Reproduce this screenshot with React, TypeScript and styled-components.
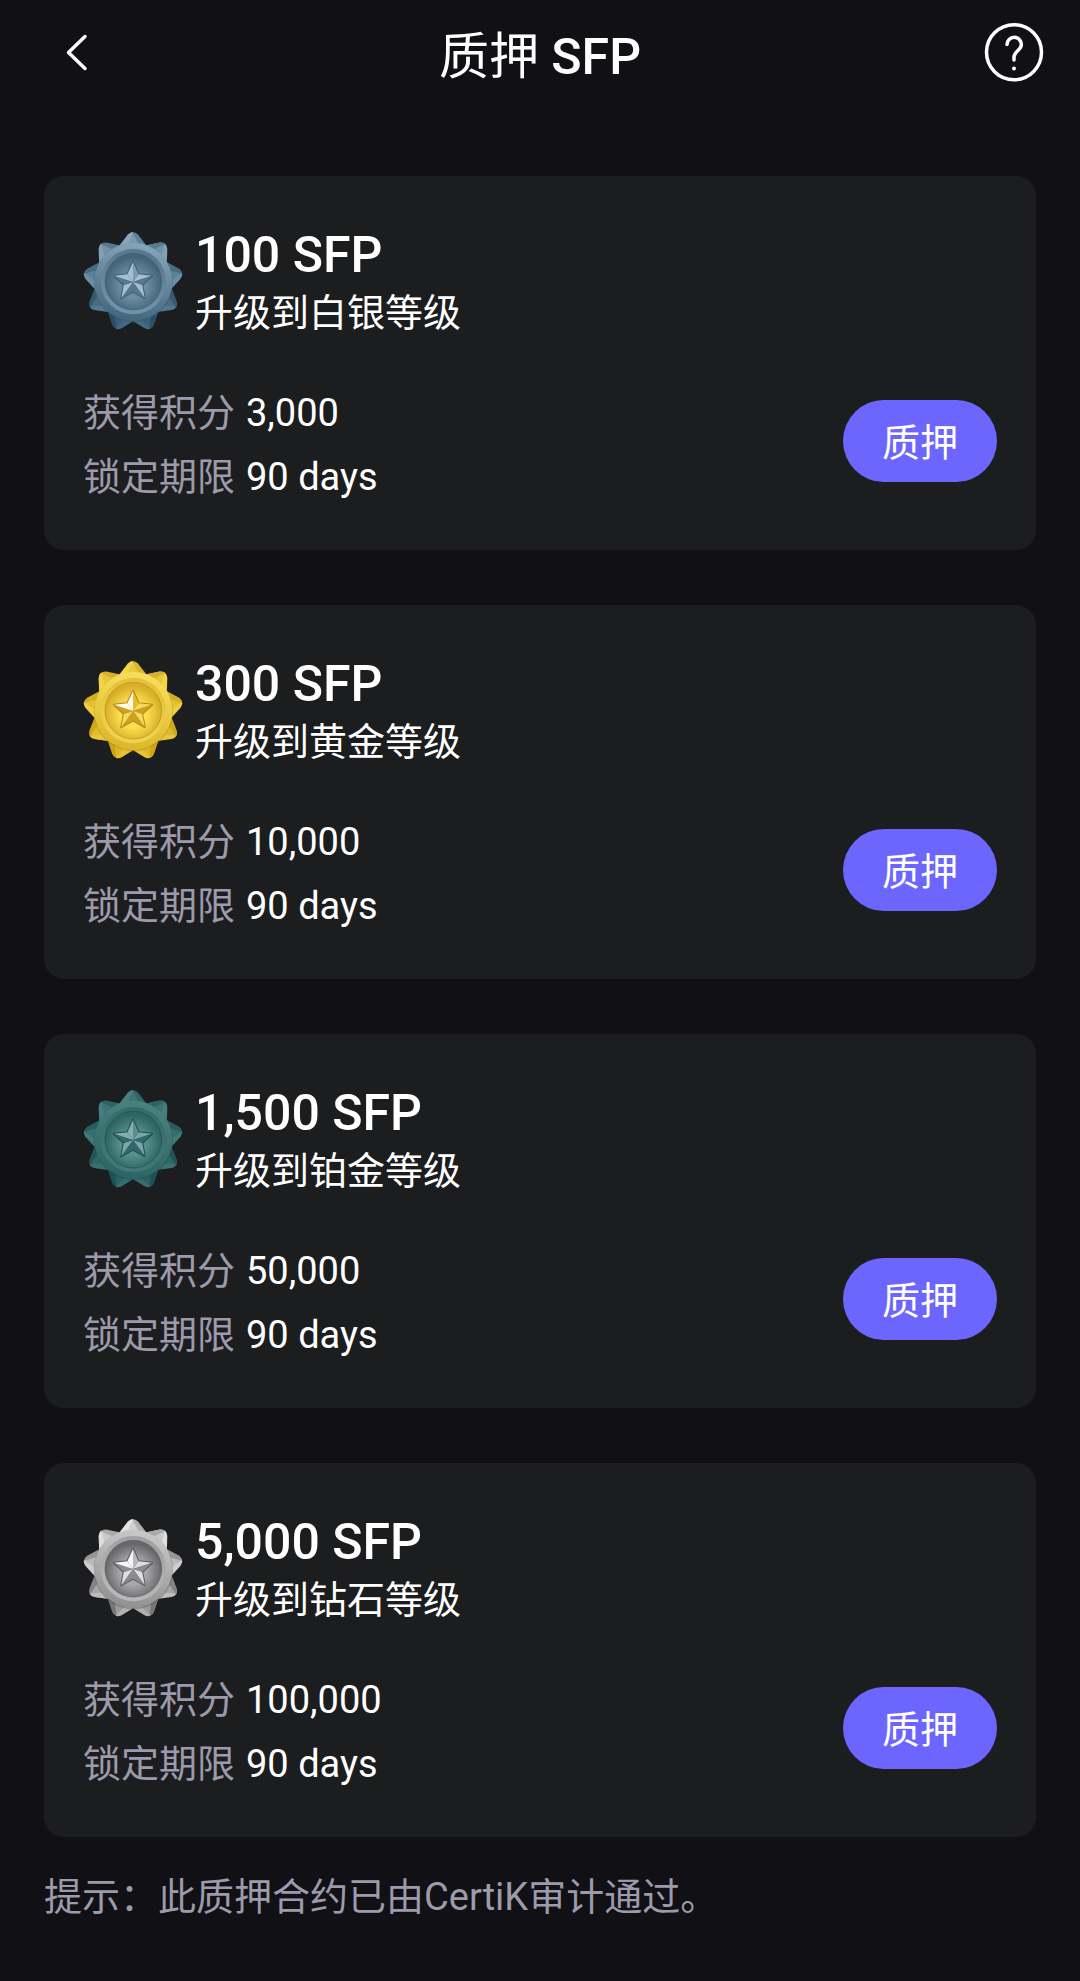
import React, { useId } from "react";
import styled, { createGlobalStyle } from "styled-components";

const GlobalStyle = createGlobalStyle`
  *, *::before, *::after { box-sizing: border-box; }
  html { background: #111015; }
  body {
    margin: 0;
    background: #111015;
    color: #ffffff;
    font-family: Roboto, "Noto Sans CJK SC", sans-serif;
    font-size: 38px;
    line-height: 64px;
  }
  h1, h2, p, dl, dd, ul { margin: 0; padding: 0; }
  button { font: inherit; color: inherit; border: 0; cursor: pointer; }
`;

const Header = styled.header`
  display: grid;
  grid-template-columns: 1fr auto 1fr;
  align-items: center;
  height: 112px;
  padding: 0 32px 8px;
`;

const Title = styled.h1`
  font-size: 50px;
  font-weight: 500;
  line-height: 64px;
  padding-top: 10px;
`;

const Han = styled.span`
  font-weight: 400;
`;

const IconButton = styled.button<{ $end?: boolean }>`
  display: flex;
  justify-self: ${({ $end }) => ($end ? "end" : "start")};
  padding: 0;
  background: none;
`;

const Main = styled.main`
  padding: 64px 44px 32px;
`;

const TierList = styled.ul`
  display: grid;
  gap: 55px;
  list-style: none;
`;

const Card = styled.li`
  display: grid;
  gap: 40px;
  padding: 46px 39px 41px;
  border-radius: 20px;
  background: #1c1d1f;
`;

const CardHead = styled.div`
  display: flex;
  align-items: center;
  gap: 12px;
`;

const Heading = styled.div`
  padding-top: 4px;
`;

const Amount = styled.h2`
  font-size: 50px;
  font-weight: 500;
  line-height: 59px;
`;

const Level = styled.p`
  line-height: 56px;
`;

const CardBody = styled.div`
  display: flex;
  align-items: center;
  justify-content: space-between;
`;

const Fact = styled.div`
  display: flex;
  gap: 11px;
`;

const Term = styled.dt`
  color: #9d9bab;
`;

const StakeButton = styled.button`
  margin-bottom: 8px;
  padding: 11px 39px 7px;
  border-radius: 41px;
  background: #6c66ff;
`;

const Note = styled.p`
  padding-top: 28px;
  color: #9d9bab;
`;

type Palette = {
  tipLight: string;
  tipDark: string;
  baseLight: string;
  baseDark: string;
  ringTop: string;
  ringBottom: string;
  wellEdge: string;
  wellCore: string;
  starLight: string;
  starMid: string;
  starDark: string;
  glint: string;
  line: string;
};

const palettes: Record<string, Palette> = {
  silver: {
    tipLight: "#8aa8bc", tipDark: "#5d8096", baseLight: "#426882", baseDark: "#294c63",
    ringTop: "#86a5ba", ringBottom: "#42667d", wellEdge: "#43647a", wellCore: "#6c8ea3",
    starLight: "#a3bfd6", starMid: "#7d9cb2", starDark: "#56778d", glint: "#a3bfd6", line: "#3c5b70",
  },
  gold: {
    tipLight: "#f3d64c", tipDark: "#d8b42a", baseLight: "#e6c234", baseDark: "#cda316",
    ringTop: "#f8de5e", ringBottom: "#dcb627", wellEdge: "#d6af28", wellCore: "#ffe152",
    starLight: "#f5da61", starMid: "#e6bd2e", starDark: "#cda01d", glint: "#fffbe6", line: "#b28a14",
  },
  platinum: {
    tipLight: "#4a7f80", tipDark: "#2f6667", baseLight: "#356d6d", baseDark: "#1c5052",
    ringTop: "#4b827f", ringBottom: "#2c6464", wellEdge: "#2d6464", wellCore: "#568f8c",
    starLight: "#7ba5a7", starMid: "#5c8c8d", starDark: "#33676a", glint: "#84adaf", line: "#1e4b4e",
  },
  diamond: {
    tipLight: "#e4e4e4", tipDark: "#b0b0b1", baseLight: "#b0b0b1", baseDark: "#747476",
    ringTop: "#c9c9ca", ringBottom: "#909091", wellEdge: "#68676c", wellCore: "#a9a8ac",
    starLight: "#dededf", starMid: "#b9b9bb", starDark: "#8b8b8e", glint: "#f6f6f6", line: "#57565a",
  },
};

const CX = 187;
const CY = 186;

const polar = (radius: number, degrees: number) => {
  const a = (degrees * Math.PI) / 180;
  return `${(CX + radius * Math.sin(a)).toFixed(1)} ${(CY - radius * Math.cos(a)).toFixed(1)}`;
};

const tips = Array.from({ length: 9 }, (_, i) => i * 40);

const mix = (a: string, b: string, t: number) => {
  const part = (hex: string, i: number) => parseInt(hex.slice(1 + i * 2, 3 + i * 2), 16);
  return (
    "#" +
    [0, 1, 2]
      .map((i) => Math.round(part(a, i) + (part(b, i) - part(a, i)) * t).toString(16).padStart(2, "0"))
      .join("")
  );
};

function Medal({ tier }: { tier: string }) {
  const id = useId();
  const p = palettes[tier];
  const starFills = [
    [p.glint, p.starMid],
    [p.starLight, p.starDark],
    [p.starLight, p.starDark],
    [p.starDark, p.starLight],
    [p.starDark, p.glint],
  ];
  const starOutline =
    "M" + [0, 1, 2, 3, 4].map((i) => `${polar(60, i * 72)}L${polar(29, i * 72 + 36)}`).join("L") + "Z";
  return (
    <svg width="100" height="100" viewBox="37 36 300 300" aria-hidden="true">
      <defs>
        <linearGradient id={`${id}ring`} x1="0.6" y1="0" x2="0.4" y2="1">
          <stop offset="0" stopColor={p.ringTop} />
          <stop offset="1" stopColor={p.ringBottom} />
        </linearGradient>
        <linearGradient id={`${id}bevel`} x1="0.4" y1="1" x2="0.6" y2="0">
          <stop offset="0" stopColor={p.ringTop} />
          <stop offset="1" stopColor={p.ringBottom} />
        </linearGradient>
        <radialGradient id={`${id}well`} cy="0.56">
          <stop offset="0.45" stopColor={p.wellCore} />
          <stop offset="1" stopColor={p.wellEdge} />
        </radialGradient>
      </defs>
      {tips.map((angle) => {
        const depth = (1 - Math.cos((angle * Math.PI) / 180)) / 2;
        const light = mix(p.tipLight, p.baseLight, depth);
        const dark = mix(p.tipDark, p.baseDark, depth);
        const rightSide = angle > 0 && angle < 180;
        return (
          <g key={angle}>
            <path
              d={`M${CX} ${CY}L${polar(116, angle - 21)}L${polar(143, angle - 6)}Q${polar(157, angle)} ${polar(143, angle + 6)}L${polar(116, angle + 21)}Z`}
              fill={rightSide ? light : dark}
            />
            <path
              d={`M${CX} ${CY}L${polar(116, angle - 21)}L${polar(143, angle - 6)}Q${polar(149, angle - 3)} ${polar(150, angle)}Z`}
              fill={rightSide ? dark : light}
            />
            <path
              d={`M${polar(115, angle - 8)}L${polar(147, angle)}L${polar(115, angle + 8)}Z`}
              fill={mix(light, dark, 0.4)}
            />
          </g>
        );
      })}
      <circle cx={CX + 1} cy={CY + 2} r="119" fill={p.line} opacity="0.4" />
      <circle cx={CX + 1} cy={CY - 1} r="117" fill={`url(#${id}ring)`} />
      <circle cx={CX + 1} cy={CY - 1} r="98" fill={`url(#${id}bevel)`} opacity="0.7" />
      <circle cx={CX + 1} cy={CY - 1} r="85" fill={`url(#${id}well)`} stroke={p.line} strokeOpacity="0.6" strokeWidth="3" />
      <path d={starOutline} fill={p.line} stroke={p.line} strokeWidth="6" strokeLinejoin="round" />
      {starFills.map(([left, right], i) => (
        <g key={i}>
          <path d={`M${CX} ${CY}L${polar(29, i * 72 - 36)}L${polar(60, i * 72)}Z`} fill={left} />
          <path d={`M${CX} ${CY}L${polar(60, i * 72)}L${polar(29, i * 72 + 36)}Z`} fill={right} />
        </g>
      ))}
    </svg>
  );
}

const tiers = [
  { tier: "silver", amount: "100", level: "升级到白银等级", points: "3,000" },
  { tier: "gold", amount: "300", level: "升级到黄金等级", points: "10,000" },
  { tier: "platinum", amount: "1,500", level: "升级到铂金等级", points: "50,000" },
  { tier: "diamond", amount: "5,000", level: "升级到钻石等级", points: "100,000" },
];

export default function App() {
  return (
    <>
      <GlobalStyle />
      <Header>
        <IconButton type="button" aria-label="返回">
          <svg width="68" height="68" viewBox="0 0 68 68" fill="none" stroke="#fff" strokeWidth="3.5" strokeLinecap="round" strokeLinejoin="round" aria-hidden="true">
            <path d="M53 18.5L36.5 34.5L53 50.5" />
          </svg>
        </IconButton>
        <Title><Han>质押</Han> SFP</Title>
        <IconButton type="button" aria-label="帮助" $end>
          <svg width="68" height="68" viewBox="0 0 68 68" fill="none" stroke="#fff" strokeWidth="3.5" strokeLinecap="round" strokeLinejoin="round" aria-hidden="true">
            <circle cx="34" cy="34.3" r="27.5" />
            <path d="M27 26.5A7.2 7.2 0 0 1 41.4 26.5C41.4 32 34 33.5 34 39V42" />
            <circle cx="34" cy="50.6" r="2" fill="#fff" stroke="none" />
          </svg>
        </IconButton>
      </Header>
      <Main>
        <TierList>
          {tiers.map((t) => (
            <Card key={t.tier}>
              <CardHead>
                <Medal tier={t.tier} />
                <Heading>
                  <Amount>{t.amount} SFP</Amount>
                  <Level>{t.level}</Level>
                </Heading>
              </CardHead>
              <CardBody>
                <dl>
                  <Fact><Term>获得积分</Term><dd>{t.points}</dd></Fact>
                  <Fact><Term>锁定期限</Term><dd>90 days</dd></Fact>
                </dl>
                <StakeButton type="button">质押</StakeButton>
              </CardBody>
            </Card>
          ))}
        </TierList>
        <Note>提示：此质押合约已由CertiK审计通过。</Note>
      </Main>
    </>
  );
}
